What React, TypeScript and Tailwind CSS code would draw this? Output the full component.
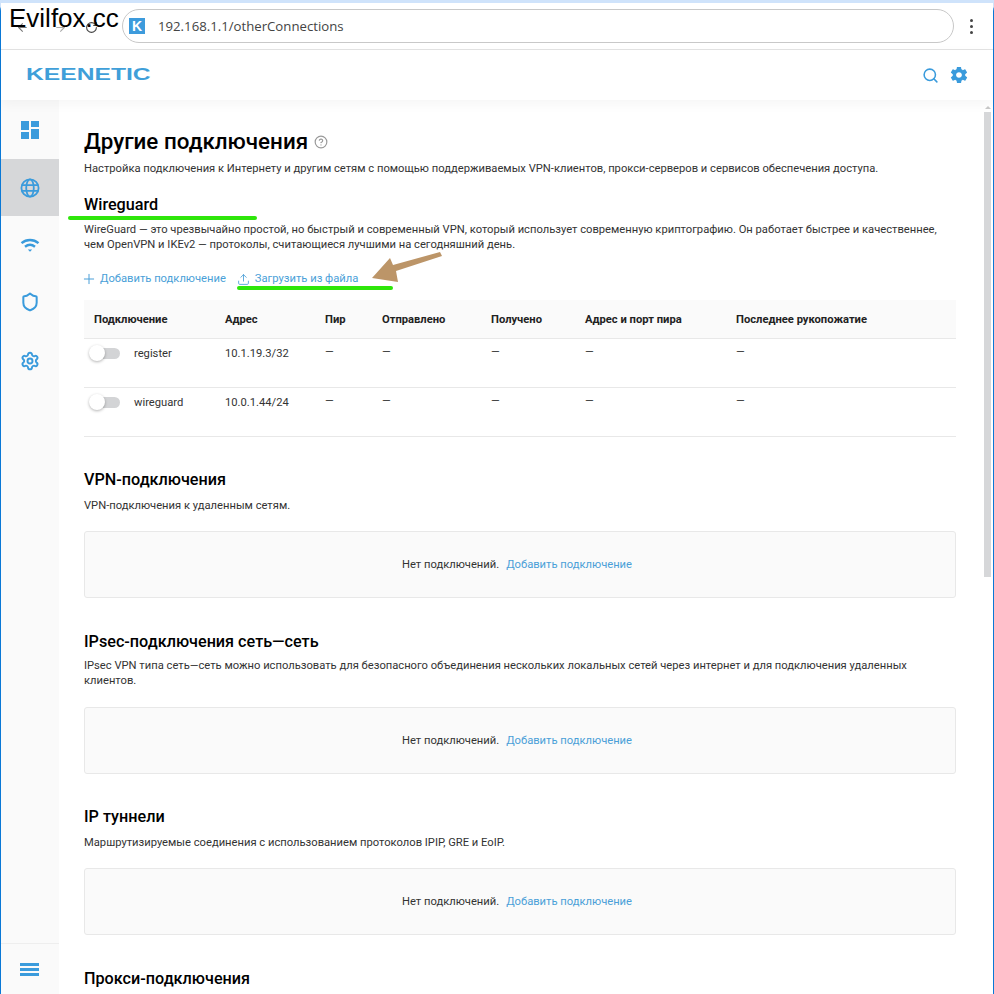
import { ArrowLeft, ArrowRight, CircleHelp, Plus, RotateCw, Search, Settings, Shield, Upload } from 'lucide-react'
import { IoMdSettings } from 'react-icons/io'

const columns = [
  { label: 'Подключение', width: 'w-[131px]' },
  { label: 'Адрес', width: 'w-[100px]' },
  { label: 'Пир', width: 'w-[57px]' },
  { label: 'Отправлено', width: 'w-[109px]' },
  { label: 'Получено', width: 'w-[94px]' },
  { label: 'Адрес и порт пира', width: 'w-[151px]' },
  { label: 'Последнее рукопожатие', width: 'w-[210px]' },
]

const connections = [
  { name: 'register', address: '10.1.19.3/32' },
  { name: 'wireguard', address: '10.0.1.44/24' },
]

function EmptyBox() {
  return (
    <div className="h-[67px] rounded-[3px] border border-[#e8e8e8] bg-[#fafafa] flex items-center justify-center pr-[6px] pt-[2px]">
      <span className="text-[#333]">Нет подключений.</span>
      <span className="ml-[7px] text-[#4a9fd8]">Добавить подключение</span>
    </div>
  )
}

function Toggle() {
  return (
    <div className="relative w-[30px] h-[11px] rounded-full bg-[#d3d4d6] ml-[6px] mt-[4px]">
      <div className="absolute -left-[1px] -top-[3px] w-[16px] h-[16px] rounded-full bg-white shadow-[0_1px_3px_rgba(0,0,0,0.3)]" />
    </div>
  )
}

function DashboardIcon() {
  return (
    <svg width="20" height="20" viewBox="0 0 20 20" fill="#3a9bdc">
      <rect x="1" y="1" width="8" height="9" />
      <rect x="11" y="1" width="8" height="6" />
      <rect x="1" y="12" width="8" height="7" />
      <rect x="11" y="9" width="8" height="10" />
    </svg>
  )
}

function GlobeIcon() {
  return (
    <svg width="20" height="20" viewBox="0 0 20 20" fill="none" stroke="#3a9bdc" strokeWidth="1.8">
      <circle cx="10" cy="10" r="8.6" />
      <ellipse cx="10" cy="10" rx="3.8" ry="8.6" />
      <path d="M1.6 7.2h16.8M1.6 12.8h16.8" />
    </svg>
  )
}

function WifiIcon() {
  return (
    <svg width="20" height="20" viewBox="0 0 20 20" fill="none" stroke="#3a9bdc" strokeWidth="2.4">
      <path d="M1.5 8.2c5-4.2 12-4.2 17 0" />
      <path d="M5 11.8c3-2.4 7-2.4 10 0" />
      <path d="M7.8 14.4h4.4L10 16.8z" fill="#3a9bdc" stroke="none" />
    </svg>
  )
}

export default function App() {
  return (
    <div className="relative w-[994px] h-[994px] overflow-hidden bg-[#cfe3fb] font-['Roboto',sans-serif]">
      <div className="absolute inset-0 mt-[3px] flex flex-col bg-white border-x border-x-[#0a78d6] rounded-t-[8px]">
        {/* Browser bar */}
        <header className="h-[47px] shrink-0 flex items-center border-b border-[#e3e3e3] bg-white text-[#777]">
          <div className="flex items-center w-[121px] pl-[15px] pt-[2px]">
            <ArrowLeft size={13} />
            <ArrowRight size={13} className="ml-[25px] text-[#aaa]" />
            <RotateCw size={13} className="ml-[18px] text-[#444]" />
          </div>
          <div className="flex items-center w-[832px] h-[34px] rounded-full border border-[#c8c8c8] pl-[6px]">
            <div className="w-[16px] h-[16px] bg-[#3d9bdc] flex items-center justify-center text-white text-[14px] font-bold leading-none font-['Liberation_Sans',sans-serif]">K</div>
            <span className="ml-[13px] mt-[1px] text-[13.2px] text-[#444] font-['Open_Sans',sans-serif]">192.168.1.1/otherConnections</span>
          </div>
          <div className="ml-[16px] flex flex-col gap-[3px]">
            <span className="w-[3px] h-[3px] rounded-full bg-[#444]" />
            <span className="w-[3px] h-[3px] rounded-full bg-[#444]" />
            <span className="w-[3px] h-[3px] rounded-full bg-[#444]" />
          </div>
        </header>

        {/* Router header */}
        <div className="h-[50px] shrink-0 flex items-center justify-between pl-[25px] pr-[24px] shadow-[0_4px_12px_rgba(0,0,0,0.04)] z-10 bg-white">
          <span className="inline-block origin-left scale-x-[1.45] text-[#3f9fd9] text-[17px] font-bold font-['Liberation_Sans',sans-serif]">KEENETIC</span>
          <div className="flex items-center gap-[10px] text-[#3a9bdc]">
            <Search size={17} strokeWidth={2.2} />
            <IoMdSettings size={20} />
          </div>
        </div>

        <div className="flex flex-1 min-h-0">
          {/* Sidebar */}
          <aside className="w-[58px] shrink-0 bg-[#fafafa] flex flex-col">
            <div className="h-[59px] pr-[1px] flex items-center justify-center"><DashboardIcon /></div>
            <div className="h-[57px] pr-[1px] flex items-center justify-center bg-[#d6d7d9]"><GlobeIcon /></div>
            <div className="h-[57px] pr-[1px] flex items-center justify-center"><WifiIcon /></div>
            <div className="h-[58px] pr-[1px] flex items-center justify-center text-[#3a9bdc]"><Shield size={20} strokeWidth={2.4} /></div>
            <div className="h-[59px] pr-[1px] flex items-center justify-center text-[#3a9bdc]"><Settings size={20} strokeWidth={2.3} /></div>
            <div className="mt-auto h-[51px] pr-[1px] border-t border-[#eee] flex items-center justify-center">
              <div className="flex flex-col gap-[2px]">
                <span className="w-[19px] h-[3px] bg-[#3a9bdc]" />
                <span className="w-[19px] h-[3px] bg-[#3a9bdc]" />
                <span className="w-[19px] h-[3px] bg-[#3a9bdc]" />
              </div>
            </div>
          </aside>

          {/* Page content */}
          <main className="flex-1 pl-[25px] pt-[26px] text-[11.2px] text-[#333]">
            <div className="flex items-center h-[30px]">
              <h1 className="text-[22.4px] font-medium text-black leading-none">Другие подключения</h1>
              <CircleHelp size={14} className="ml-[6px] mt-[2px] text-[#999]" />
            </div>
            <p className="mt-[5px] leading-[15px]">Настройка подключения к Интернету и другим сетям с помощью поддерживаемых VPN-клиентов, прокси-серверов и сервисов обеспечения доступа.</p>

            <h2 className="mt-[17px] text-[16.2px] font-medium text-black leading-[24px]">Wireguard</h2>
            <p className="mt-[5px] w-[872px] leading-[15px]">WireGuard — это чрезвычайно простой, но быстрый и современный VPN, который использует современную криптографию. Он работает быстрее и качественнее, чем OpenVPN и IKEv2 — протоколы, считающиеся лучшими на сегодняшний день.</p>

            <div className="mt-[17px] flex items-center h-[20px] text-[#4a9fd8]">
              <Plus size={16} strokeWidth={1.5} className="-ml-[3px]" />
              <span className="ml-[3px]">Добавить подключение</span>
              <Upload size={13} strokeWidth={1.6} className="ml-[11px]" />
              <span className="ml-[5px]">Загрузить из файла</span>
            </div>

            <div className="mt-[11px] w-[872px]">
              <div className="h-[39px] flex items-center pl-[10px] pt-[2px] bg-[#fafafa] border-b border-[#e8e8e8] font-bold text-[#222]">
                {columns.map((col) => (
                  <div key={col.label} className={col.width}>{col.label}</div>
                ))}
              </div>
              {connections.map((row) => (
                <div key={row.name} className="h-[49px] flex border-b border-[#e8e8e8] pt-[5px] pl-[10px] leading-[20px]">
                  <div className="w-[131px] flex">
                    <div className="w-[40px] -ml-[10px]"><Toggle /></div>
                    <span className="ml-[10px]">{row.name}</span>
                  </div>
                  <div className="w-[100px]">{row.address}</div>
                  <div className="w-[57px] -mt-[2px]">—</div>
                  <div className="w-[109px] -mt-[2px]">—</div>
                  <div className="w-[94px] -mt-[2px]">—</div>
                  <div className="w-[151px] -mt-[2px]">—</div>
                  <div className="w-[210px] -mt-[2px]">—</div>
                </div>
              ))}
            </div>

            <div className="w-[872px]">
              <h2 className="mt-[31px] text-[16.2px] font-medium text-black leading-[24px]">VPN-подключения</h2>
              <p className="mt-[6px] leading-[15px]">VPN-подключения к удаленным сетям.</p>
              <div className="mt-[18px]"><EmptyBox /></div>

              <h2 className="mt-[32px] text-[16.2px] font-medium text-black leading-[24px]">IPsec-подключения сеть—сеть</h2>
              <p className="mt-[4px] leading-[15px]">IPsec VPN типа сеть—сеть можно использовать для безопасного объединения нескольких локальных сетей через интернет и для подключения удаленных клиентов.</p>
              <div className="mt-[19px]"><EmptyBox /></div>

              <h2 className="mt-[31px] text-[16.2px] font-medium text-black leading-[24px]">IP туннели</h2>
              <p className="mt-[6px] leading-[15px]">Маршрутизируемые соединения с использованием протоколов IPIP, GRE и EoIP.</p>
              <div className="mt-[18px]"><EmptyBox /></div>

              <h2 className="mt-[32px] text-[16.2px] font-medium text-black leading-[24px]">Прокси-подключения</h2>
            </div>
          </main>

          {/* Scrollbar */}
          <div className="w-[9px] shrink-0 flex flex-col">
            <div className="mt-[6px] ml-[1px] w-0 h-0 border-x-[3px] border-x-transparent border-b-[3px] border-b-[#c8c8c8]" />
            <div className="mt-[3px] h-[465px] w-[7px] bg-[#d6d7d9]" />
          </div>
        </div>
      </div>

      {/* Annotations over the screenshot */}
      <span className="absolute left-[9px] top-[3px] text-[26px] leading-[30px] text-black font-['Liberation_Sans',sans-serif]">Evilfox.cc</span>
      <div className="absolute left-[68px] top-[216px] w-[189px] h-[4px] rounded-full bg-[#2ee60a]" />
      <div className="absolute left-[237px] top-[286px] w-[156px] h-[4px] rounded-full bg-[#2ee60a]" />
      <svg className="absolute left-[370px] top-[248px]" width="74" height="36" viewBox="0 0 74 36" fill="#bc9568">
        <path d="M2 30 L20 10 L23 17 L70 4 L72 8 L26 23 L28 34 Z" />
      </svg>
    </div>
  )
}
